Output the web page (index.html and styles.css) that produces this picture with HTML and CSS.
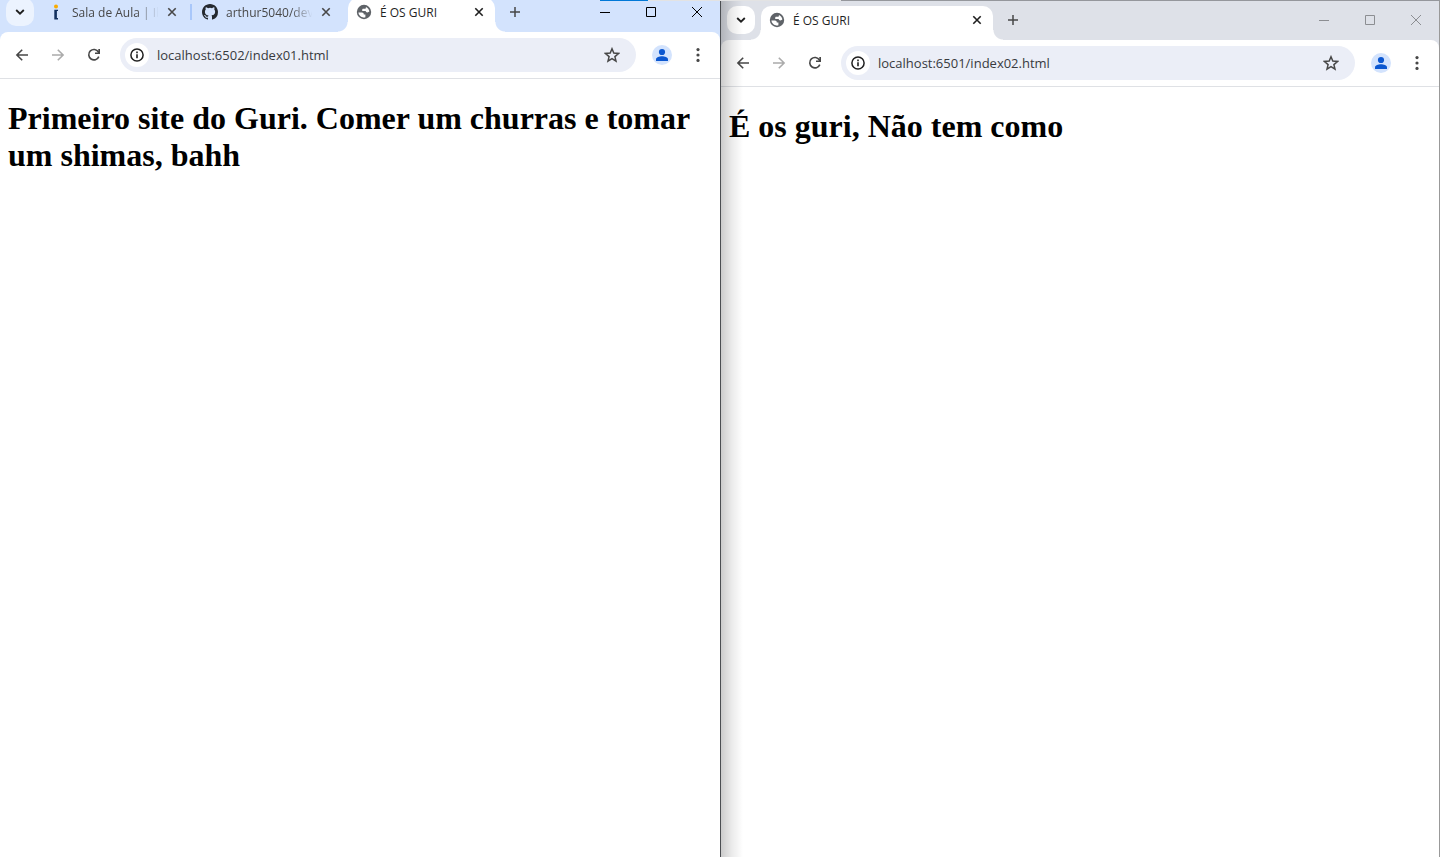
FILE: index.html
```html
<!DOCTYPE html>
<html lang="pt-BR">
<head>
<meta charset="utf-8">
<title>É OS GURI</title>
<link rel="stylesheet" href="styles.css">
</head>
<body>
<svg class="defs" aria-hidden="true">
  <symbol id="chevron" viewBox="0 0 16 16"><path d="M4.2 6 8 9.7 11.8 6" fill="none" stroke="currentColor" stroke-width="1.8"/></symbol>
  <symbol id="close" viewBox="0 0 16 16"><path d="m4.3 4.3 7.4 7.4m0-7.4-7.4 7.4" fill="none" stroke="currentColor" stroke-width="1.6"/></symbol>
  <symbol id="plus" viewBox="0 0 16 16"><path d="M8 3v10M3 8h10" fill="none" stroke="currentColor" stroke-width="1.5"/></symbol>
  <symbol id="globe" viewBox="0 0 16 16"><circle cx="8" cy="8" r="7.2" fill="#5f6368"/><path d="M2.4 8.500h3.400c1.500 0 2 .8 2 1.900h1.600v2.900c-1 .3-1.800.3-2.700 0-2.300-.6-4.100-2.300-4.300-4.800zM9.900 2.900c1.900.7 3.100 2.300 3.500 4.400-.4.800-1.200 1.100-2 1.100-1.200 0-1.700-.5-1.700-1.400H6.200V5.900c0-.7.4-1.100 1.100-1.100h1.400c.8 0 1.200-.5 1.200-1.100z" fill="#fff"/></symbol>
  <symbol id="github" viewBox="0 0 16 16"><path fill="#24292f" d="M8 0C3.58 0 0 3.58 0 8c0 3.54 2.29 6.53 5.47 7.59.4.07.55-.17.55-.38 0-.19-.01-.82-.01-1.49-2.01.37-2.53-.49-2.69-.94-.09-.23-.48-.94-.82-1.13-.28-.15-.68-.52-.01-.53.63-.01 1.08.58 1.23.82.72 1.21 1.87.87 2.33.66.07-.52.28-.87.51-1.07-1.78-.2-3.64-.89-3.64-3.95 0-.87.31-1.59.82-2.15-.08-.2-.36-1.02.08-2.12 0 0 .67-.21 2.2.82a7.6 7.6 0 0 1 4 0c1.53-1.04 2.2-.82 2.2-.82.44 1.1.16 1.92.08 2.12.51.56.82 1.27.82 2.15 0 3.07-1.87 3.75-3.65 3.95.29.25.54.73.54 1.48 0 1.07-.01 1.93-.01 2.2 0 .21.15.46.55.38A8.01 8.01 0 0 0 16 8c0-4.42-3.58-8-8-8z"/></symbol>
  <symbol id="ibmec" viewBox="0 0 16 16"><circle cx="8" cy="2.400" r="2" fill="#f9ab00"/><path d="M6.300 5.800H10v1.300H8.900v6.800H10v1.500H6.300z" fill="#12305f"/></symbol>
  <symbol id="back" viewBox="0 0 16 16"><path d="M14 8H3M8.200 2.700 2.900 8l5.300 5.300" fill="none" stroke="currentColor" stroke-width="1.6"/></symbol>
  <symbol id="forward" viewBox="0 0 16 16"><path d="M2 8h11M7.800 2.700 13.100 8l-5.300 5.300" fill="none" stroke="currentColor" stroke-width="1.6"/></symbol>
  <symbol id="reload" viewBox="0 0 16 16"><path d="M12.800 9.600A5.200 5.200 0 1 1 12.400 5L13 6" fill="none" stroke="currentColor" stroke-width="1.6"/><path d="M14 2v5H9V5.400h3.300V2z" fill="currentColor"/></symbol>
  <symbol id="info" viewBox="0 0 16 16"><circle cx="8" cy="8" r="6.100" fill="none" stroke="currentColor" stroke-width="1.5"/><path d="M7.200 7.200h1.600v4H7.200zM7.200 4.600h1.600v1.600H7.200z" fill="currentColor"/></symbol>
  <symbol id="star" viewBox="0 0 16 16"><path d="m8 1.800 1.800 4.300 4.700.4-3.600 3.100 1.100 4.600L8 11.700l-4 2.500 1.100-4.600-3.600-3.100 4.700-.4z" fill="none" stroke="currentColor" stroke-width="1.5"/></symbol>
  <symbol id="person" viewBox="0 0 20 20"><circle cx="10" cy="10" r="10" fill="#d3e3fd"/><circle cx="10" cy="7" r="3.100" fill="#0b57d0"/><path d="M4 16v-1.800c0-2.100 3.400-3 6-3s6 .9 6 3V16z" fill="#0b57d0"/></symbol>
  <symbol id="dots" viewBox="0 0 16 16"><g fill="currentColor"><circle cx="8" cy="2.600" r="1.600"/><circle cx="8" cy="8" r="1.600"/><circle cx="8" cy="13.400" r="1.600"/></g></symbol>
  <symbol id="minimize" viewBox="0 0 10 10"><path d="M0 5.500h10" stroke="currentColor"/></symbol>
  <symbol id="maximize" viewBox="0 0 10 10"><path d="M.5.5h9v9h-9z" fill="none" stroke="currentColor"/></symbol>
  <symbol id="exit" viewBox="0 0 10 10"><path d="m0 0 10 10M10 0 0 10" stroke="currentColor"/></symbol>
</svg>
<div class="desktop">
  <section class="window window-left" aria-label="index01">
    <header class="strip">
      <button class="tab-search" aria-label="Pesquisar guias"><svg class="icon"><use href="#chevron"/></svg></button>
      <div class="tabs">
        <div class="tab"><svg class="icon"><use href="#ibmec"/></svg><span class="tab-title fade">Sala de Aula | Ib</span><button class="tab-close" aria-label="Fechar"><svg class="icon"><use href="#close"/></svg></button></div>
        <div class="tab divided"><svg class="icon"><use href="#github"/></svg><span class="tab-title fade">arthur5040/dev-</span><button class="tab-close" aria-label="Fechar"><svg class="icon"><use href="#close"/></svg></button></div>
        <div class="tab active"><svg class="icon"><use href="#globe"/></svg><span class="tab-title">É OS GURI</span><button class="tab-close" aria-label="Fechar"><svg class="icon"><use href="#close"/></svg></button></div>
      </div>
      <button class="new-tab" aria-label="Nova guia"><svg class="icon"><use href="#plus"/></svg></button>
      <div class="controls">
        <button aria-label="Minimizar"><svg><use href="#minimize"/></svg></button>
        <button aria-label="Maximizar"><svg><use href="#maximize"/></svg></button>
        <button aria-label="Fechar janela"><svg><use href="#exit"/></svg></button>
      </div>
    </header>
    <nav class="toolbar">
      <button class="tool" aria-label="Voltar"><svg class="icon"><use href="#back"/></svg></button>
      <button class="tool" aria-label="Avançar" disabled><svg class="icon"><use href="#forward"/></svg></button>
      <button class="tool" aria-label="Recarregar"><svg class="icon"><use href="#reload"/></svg></button>
      <div class="omnibox">
        <button class="site-info" aria-label="Informações do site"><svg class="icon"><use href="#info"/></svg></button>
        <input class="url" type="text" aria-label="Endereço" value="localhost:6502/index01.html">
        <button class="bookmark" aria-label="Favoritar"><svg class="icon"><use href="#star"/></svg></button>
      </div>
      <button class="tool" aria-label="Perfil"><svg class="avatar"><use href="#person"/></svg></button>
      <button class="tool" aria-label="Menu"><svg class="icon"><use href="#dots"/></svg></button>
    </nav>
    <main class="page"><h1>Primeiro site do Guri. Comer um churras e tomar um shimas, bahh</h1></main>
  </section>
  <section class="window window-right" aria-label="index02">
    <header class="strip">
      <button class="tab-search" aria-label="Pesquisar guias"><svg class="icon"><use href="#chevron"/></svg></button>
      <div class="tabs">
        <div class="tab active"><svg class="icon"><use href="#globe"/></svg><span class="tab-title">É OS GURI</span><button class="tab-close" aria-label="Fechar"><svg class="icon"><use href="#close"/></svg></button></div>
      </div>
      <button class="new-tab" aria-label="Nova guia"><svg class="icon"><use href="#plus"/></svg></button>
      <div class="controls">
        <button aria-label="Minimizar"><svg><use href="#minimize"/></svg></button>
        <button aria-label="Maximizar"><svg><use href="#maximize"/></svg></button>
        <button aria-label="Fechar janela"><svg><use href="#exit"/></svg></button>
      </div>
    </header>
    <nav class="toolbar">
      <button class="tool" aria-label="Voltar"><svg class="icon"><use href="#back"/></svg></button>
      <button class="tool" aria-label="Avançar" disabled><svg class="icon"><use href="#forward"/></svg></button>
      <button class="tool" aria-label="Recarregar"><svg class="icon"><use href="#reload"/></svg></button>
      <div class="omnibox">
        <button class="site-info" aria-label="Informações do site"><svg class="icon"><use href="#info"/></svg></button>
        <input class="url" type="text" aria-label="Endereço" value="localhost:6501/index02.html">
        <button class="bookmark" aria-label="Favoritar"><svg class="icon"><use href="#star"/></svg></button>
      </div>
      <button class="tool" aria-label="Perfil"><svg class="avatar"><use href="#person"/></svg></button>
      <button class="tool" aria-label="Menu"><svg class="icon"><use href="#dots"/></svg></button>
    </nav>
    <main class="page"><h1>É os guri, Não tem como</h1></main>
  </section>
  <div class="screen-edge"></div>
</div>
</body>
</html>
```

FILE: styles.css
```css
* { box-sizing: border-box; }
body { margin: 0; background: #fff; }
button { display: flex; align-items: center; justify-content: center; padding: 0; border: 0; background: none; color: inherit; flex: none; }
svg { display: block; flex: none; }
.defs { position: absolute; width: 0; height: 0; }
.icon { width: 16px; height: 16px; }
.avatar { width: 20px; height: 20px; }

.desktop { position: relative; display: flex; height: 100vh; overflow: hidden; }
.window { position: relative; display: flex; flex-direction: column; min-width: 0; background: linear-gradient(var(--strip) 60px, #fff 60px); font-family: "Open Sans", "Noto Sans", sans-serif; color: #474747; }
.window-left { --strip: #d3e3fd; flex: none; width: calc(50% + 1px); margin-top: -8px; border-right: 1px solid #4b4e52; }
.window-right { --strip: #dee1e8; flex: 1; border-right: 1px solid #999; }
.window-right::after { content: ""; position: absolute; top: 0; bottom: 0; left: 0; width: 22px; background: linear-gradient(90deg, rgba(0,0,0,.2), rgba(0,0,0,.08) 50%, rgba(0,0,0,0)); pointer-events: none; }

.strip { display: flex; align-items: flex-end; height: 40px; padding-left: 6px; background: var(--strip); }
.tab-search { width: 28px; height: 28px; margin-bottom: 6px; border-radius: 10px; background: #fff; color: #1f1f1f; }
.window-left .tab-search { background: #ecf3fe; }
.tabs { display: flex; min-width: 0; margin-left: 6px; }
.tab { position: relative; display: flex; align-items: center; width: 154px; height: 34px; padding: 0 14px 6px 8px; }
.window-left .tab.active { width: 147px; }
.window-right .tab.active { width: 232px; }
.tab.divided::before { content: ""; position: absolute; left: -4px; top: 6px; width: 2px; height: 16px; background: #a8c7fa; }
.tab.active { padding-right: 8px; border-radius: 10px 10px 0 0; background: #fff; color: #1f1f1f; }
.tab.active::before, .tab.active::after { content: ""; position: absolute; bottom: 0; width: 10px; height: 10px; }
.tab.active::before { right: 100%; background: radial-gradient(circle at 0 0, transparent 9px, #fff 10px); }
.tab.active::after { left: 100%; background: radial-gradient(circle at 100% 0, transparent 9px, #fff 10px); }
.tab-title { flex: 1; min-width: 0; margin-left: 8px; padding-top: 2px; overflow: hidden; white-space: nowrap; font-size: 12px; line-height: 16px; }
.fade { margin-right: -6px; -webkit-mask-image: linear-gradient(90deg, #000 70%, transparent 94%); mask-image: linear-gradient(90deg, #000 70%, transparent 94%); }
.tab-close { width: 16px; height: 16px; }
.fade + .tab-close { margin-left: 6px; }
.new-tab { width: 28px; height: 28px; margin: 0 0 6px 6px; }
.controls { display: flex; align-self: stretch; margin-left: auto; }
.controls button { width: 46px; }
.controls svg { width: 10px; height: 10px; }
.window-left .controls { color: #000; }
.window-right .controls { color: #8c8e92; }

.toolbar { display: flex; align-items: center; height: 47px; padding: 0 4px; border-bottom: 1px solid #dfe1e5; background: #fff; border-radius: 8px 8px 0 0; }
.tool { width: 36px; height: 36px; }
.tool:disabled { color: #ababab; }
.omnibox { display: flex; flex: 1; align-items: center; min-width: 0; height: 34px; margin: 0 8px; padding: 0 16px 0 5px; border-radius: 17px; background: #ebeef7; }
.site-info { width: 24px; height: 24px; border-radius: 12px; background: #fff; color: #1f1f1f; }
.url { flex: 1; min-width: 0; height: 24px; margin-left: 8px; padding: 0; border: 0; outline: 0; background: transparent; color: #383a3e; font-family: "Open Sans", "Noto Sans", sans-serif; font-size: 13px; }
.bookmark { width: 16px; height: 16px; }

.page { flex: 1; padding: 0 8px; background: #fff; }
.page h1 { margin: 21px 0; color: #000; font-family: "Liberation Serif", "Times New Roman", serif; font-size: 32px; line-height: 37px; font-weight: 700; }

.screen-edge { position: absolute; top: 0; right: 0; left: 600px; height: 1px; background: linear-gradient(90deg, #0078d7 48px, #e3e3e3 48px 241px, #95979c 241px); }
```
